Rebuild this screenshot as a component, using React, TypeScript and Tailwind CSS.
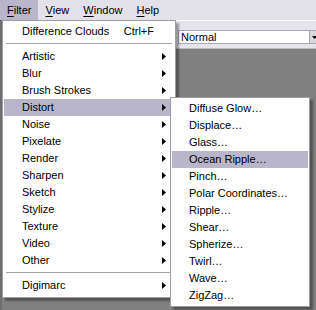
import React from "react";

const filterItems = [
  "Artistic",
  "Blur",
  "Brush Strokes",
  "Distort",
  "Noise",
  "Pixelate",
  "Render",
  "Sharpen",
  "Sketch",
  "Stylize",
  "Texture",
  "Video",
  "Other",
];

const distortItems = [
  "Diffuse Glow…",
  "Displace…",
  "Glass…",
  "Ocean Ripple…",
  "Pinch…",
  "Polar Coordinates…",
  "Ripple…",
  "Shear…",
  "Spherize…",
  "Twirl…",
  "Wave…",
  "ZigZag…",
];

function Arrow() {
  return (
    <svg width="4" height="7" viewBox="0 0 4 7" className="shrink-0">
      <path d="M0 0L4 3.5L0 7Z" fill="#000" />
    </svg>
  );
}

function Separator() {
  return (
    <div className="h-[8px] flex flex-col justify-center px-[2px]">
      <div className="h-px bg-[#a6a6a6]" />
      <div className="h-px bg-white" />
    </div>
  );
}

function MenuTitle({ first, rest, active }: { first: string; rest: string; active?: boolean }) {
  return (
    <div
      className={`h-[20px] px-[7px] flex items-center ${active ? "bg-[#b9b6c9]" : ""}`}
    >
      <span className="underline underline-offset-2">{first}</span>
      <span>{rest}</span>
    </div>
  );
}

export default function App() {
  return (
    <div
      className="relative w-[316px] h-[310px] overflow-hidden bg-[#808080] text-[11px] text-black select-none"
      style={{ fontFamily: '"Liberation Sans", Arial, sans-serif' }}
    >
      {/* menu bar */}
      <div className="h-[20px] bg-[#e3e2ea] flex items-center">
        <MenuTitle first="F" rest="ilter" active />
        <MenuTitle first="V" rest="iew" />
        <MenuTitle first="W" rest="indow" />
        <MenuTitle first="H" rest="elp" />
      </div>

      {/* options bar */}
      <div className="h-[29px] bg-[#e6e5ec] border-t border-white border-b border-b-[#bdbcc6] flex items-start pt-[9px] pl-[178px]">
        <div className="w-[142px] shrink-0 h-[14px] bg-white border border-[#a9a8b3] flex items-center">
          <span className="pl-[2px] flex-1 leading-none">Normal</span>
          <div className="w-[10px] h-full bg-[#d8d7de] border-l border-[#a9a8b3] flex items-center justify-center">
            <svg width="5" height="3" viewBox="0 0 5 3">
              <path d="M0 0H5L2.5 3Z" fill="#000" />
            </svg>
          </div>
        </div>
      </div>

      {/* workspace left strip */}
      <div className="absolute left-0 top-[20px] w-[2px] h-[290px] bg-[#6e6e6e]" />

      {/* Filter menu */}
      <div className="absolute left-[2px] top-[20px] w-[174px] h-[278px] bg-white border border-[#9d9da1] shadow-[3px_3px_2px_rgba(0,0,0,0.35)] pt-[2px] px-[1px]">
        <div className="h-[17px] flex items-center pl-[18px] pr-[20px]">
          <span className="flex-1">Difference Clouds</span>
          <span>Ctrl+F</span>
        </div>
        <Separator />
        {filterItems.map((t) => (
          <div
            key={t}
            className={`h-[17px] flex items-center pl-[18px] pr-[8px] ${t === "Distort" ? "bg-[#b9b6c9]" : ""}`}
          >
            <span className="flex-1">{t}</span>
            <Arrow />
          </div>
        ))}
        <Separator />
        <div className="h-[17px] flex items-center pl-[18px] pr-[8px]">
          <span className="flex-1">Digimarc</span>
          <Arrow />
        </div>
      </div>

      {/* Distort submenu */}
      <div className="absolute left-[170px] top-[97px] w-[140px] h-[210px] bg-white border border-[#9d9da1] shadow-[3px_3px_2px_rgba(0,0,0,0.35)] pt-[2px] px-[1px]">
        {distortItems.map((t) => (
          <div
            key={t}
            className={`h-[17px] flex items-center pl-[17px] ${t === "Ocean Ripple…" ? "bg-[#b9b6c9]" : ""}`}
          >
            {t}
          </div>
        ))}
      </div>
    </div>
  );
}
